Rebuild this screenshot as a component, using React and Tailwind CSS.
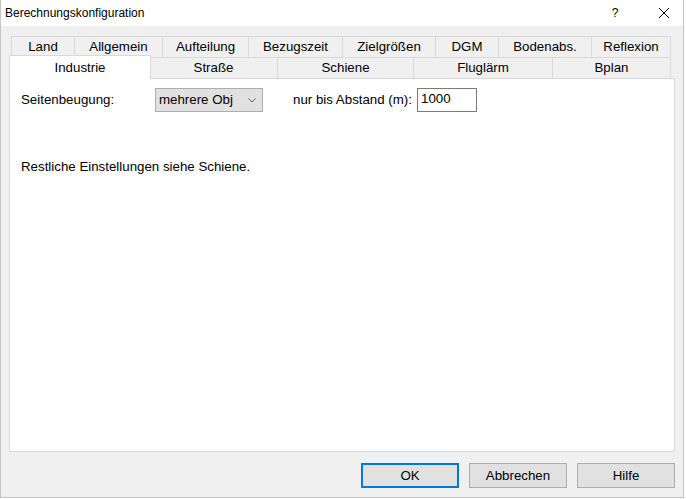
const rowOne = [
  { label: "Land", w: "w-[63px]" },
  { label: "Allgemein", w: "w-[88px]" },
  { label: "Aufteilung", w: "w-[86px]" },
  { label: "Bezugszeit", w: "w-[94px]" },
  { label: "Zielgrößen", w: "w-[93px]" },
  { label: "DGM", w: "w-[63px]" },
  { label: "Bodenabs.", w: "w-[93px]" },
  { label: "Reflexion", w: "w-[80px]" },
];

const rowTwo = [
  { label: "Straße", w: "w-[128px]" },
  { label: "Schiene", w: "w-[136px]" },
  { label: "Fluglärm", w: "w-[139px]" },
  { label: "Bplan", w: "w-[119px]" },
];

function Tab({ label, w, last }) {
  return (
    <div
      className={`${w} h-[21px] border-t border-l border-[#d9d9d9] ${last ? "border-r" : ""} bg-[#f0f0f0] flex items-center justify-center`}
    >
      {label}
    </div>
  );
}

function Button({ children, primary }) {
  return (
    <button
      className={`w-[98px] h-[25px] bg-[#e1e1e1] flex items-center justify-center ${
        primary ? "border-2 border-[#0078d7]" : "border border-[#adadad]"
      }`}
    >
      {children}
    </button>
  );
}

export default function App() {
  return (
    <div className="w-[686px] h-[499px] bg-white text-black text-[13.3px] font-['Liberation_Sans',Arial,sans-serif]">
      <div className="w-[684px] h-[498px] border border-[#c4c4c4] border-t-0 flex flex-col bg-[#f0f0f0]">
        {/* title bar */}
        <div className="h-[26px] bg-white flex items-center text-[12px]">
          <span className="pl-[4px]">Berechnungskonfiguration</span>
          <span className="ml-auto w-[8px] text-center">?</span>
          <div className="w-[38px] ml-[26px] h-full flex items-center justify-center">
            <svg width="12" height="12" viewBox="0 0 12 12">
              <path d="M1 1 L11 11 M11 1 L1 11" stroke="#000" strokeWidth="1" />
            </svg>
          </div>
        </div>

        <div className="flex-1 pt-[10px] pl-[8px] pr-[7px] flex flex-col">
          {/* tab rows */}
          <div className="ml-[2px] flex">
            {rowOne.map((t, i) => (
              <Tab key={t.label} {...t} last={i === rowOne.length - 1} />
            ))}
          </div>
          <div className="ml-[2px] flex h-[21px]">
            <div className="relative z-10 w-[142px] h-[24px] -mt-[2px] -ml-[2px] -mr-[2px] bg-white border-t border-l border-r border-[#d9d9d9] flex justify-center pt-[2px]">
              Industrie
            </div>
            {rowTwo.map((t, i) => (
              <Tab key={t.label} {...t} last={i === rowTwo.length - 1} />
            ))}
          </div>

          {/* page content */}
          <div className="w-[666px] h-[374px] bg-white border border-[#d9d9d9] pl-[11px] pt-[9px]">
            <div className="flex items-center h-[24px]">
              <span className="w-[134px]">Seitenbeugung:</span>
              <div className="w-[108px] h-[24px] bg-[#e1e1e1] border border-[#adadad] flex items-center pl-[3px] pr-[6px]">
                <span>mehrere Obj</span>
                <svg className="ml-auto" width="8" height="5" viewBox="0 0 8 5">
                  <path d="M0.5 0.5 L4 4 L7.5 0.5" fill="none" stroke="#606060" strokeWidth="1" />
                </svg>
              </div>
              <span className="ml-[30px] w-[124px]">nur bis Abstand (m):</span>
              <div className="w-[60px] h-[24px] border border-[#7a7a7a] bg-white pl-[3px] pt-[1px] leading-[17px]">
                1000
              </div>
            </div>
            <div className="mt-[45px]">Restliche Einstellungen siehe Schiene.</div>
          </div>

          {/* dialog buttons */}
          <div className="flex justify-end gap-[10px] mt-[11px] mr-[1px]">
            <Button primary>OK</Button>
            <Button>Abbrechen</Button>
            <Button>Hilfe</Button>
          </div>
        </div>
      </div>
    </div>
  );
}
